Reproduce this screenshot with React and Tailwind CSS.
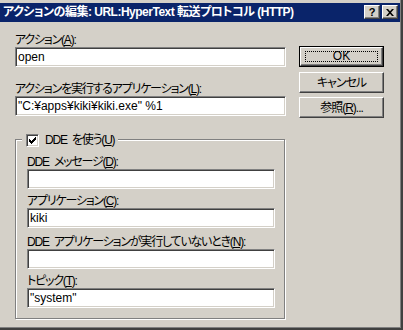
import React from 'react';

const sunken =
  'bg-white border border-t-[#808080] border-l-[#808080] border-r-white border-b-white shadow-[inset_1px_1px_0_#404040,inset_-1px_-1px_0_#d4d0c8]';
const raised =
  'bg-[#d4d0c8] border border-t-white border-l-white border-r-[#404040] border-b-[#404040] shadow-[inset_-1px_-1px_0_#808080]';

function Label({ children }) {
  return (
    <div className="h-[13px] leading-[13px] whitespace-nowrap tracking-[-1.2px] [word-spacing:3px]">{children}</div>
  );
}

function Field({ value = '', className = 'w-full' }) {
  return (
    <div className={`h-[20px] pl-[2px] leading-[18px] whitespace-nowrap overflow-hidden ${sunken} ${className}`}>
      {value}
    </div>
  );
}

function Key({ children }) {
  return <span className="underline underline-offset-[1px]">{children}</span>;
}

function Button({ children, isDefault }) {
  if (isDefault) {
    return (
      <div className="h-[21px] w-[85px] border border-black">
        <div className={`h-full w-full flex items-center justify-center ${raised}`}>
          <div className="h-[11px] w-[73px] border border-dotted border-black flex items-center justify-center leading-[11px]">
            {children}
          </div>
        </div>
      </div>
    );
  }
  return (
    <div className={`h-[21px] w-[85px] flex items-center justify-center tracking-[-1px] ${raised}`}>{children}</div>
  );
}

function Checkbox() {
  return (
    <div className={`w-[13px] h-[13px] flex items-center justify-center ${sunken}`}>
      <svg width="7" height="7" viewBox="0 0 7 7">
        <path d="M0 2h1v1h1v1h1V3h1V2h1V1h1V0h1v3H6v1H5v1H4v1H3v1H2V6H1V5H0z" fill="#000" />
      </svg>
    </div>
  );
}

export default function App() {
  return (
    <div className="w-[403px] h-[330px] flex flex-col bg-[#d4d0c8] border-r-2 border-b-2 border-r-[#404040] border-b-[#404040] shadow-[inset_-1px_-1px_0_#808080] text-[12px] text-black [font-family:'Liberation_Sans','Noto_Sans_CJK_JP',sans-serif] [font-feature-settings:'palt'] overflow-hidden">
      {/* title bar */}
      <div className="mt-[3px] mr-[1px] h-[19px] bg-[#0a246a] flex items-start pl-[3px] pr-[2px]">
        <div className="flex-1 h-[19px] leading-[19px] text-white font-bold whitespace-nowrap tracking-[-0.5px]">
          アクションの編集: URL:HyperText 転送プロトコル (HTTP)
        </div>
        <div className="mt-[2px] flex gap-[2px]">
          <div className={`w-[16px] h-[14px] flex items-center justify-center font-bold text-[11px] leading-none ${raised}`}>?</div>
          <div className={`w-[16px] h-[14px] flex items-center justify-center ${raised}`}>
            <svg width="8" height="7" viewBox="0 0 8 7">
              <path d="M0 0h2l2 2.3L6 0h2L5 3.5 8 7H6L4 4.7 2 7H0l3-3.5z" fill="#000" />
            </svg>
          </div>
        </div>
      </div>

      {/* body */}
      <div className="flex pl-[15px]">
        <div className="w-[271px] flex flex-col pt-[12px]">
          <Label>アクション(<Key>A</Key>):</Label>
          <Field value="open" />
          <div className="mt-[16px]">
            <Label>アクションを実行するアプリケーション(<Key>L</Key>):</Label>
          </div>
          <Field value={'"C:¥apps¥kiki¥kiki.exe" %1'} />

          <div className="mt-[23px] w-[270px] border border-[#808080] shadow-[inset_1px_1px_0_#fff,1px_1px_0_#fff] pl-[11px] pb-[10px] flex flex-col">
            <div className="-mt-[7px] -ml-[5px] self-start h-[14px] px-[4px] bg-[#d4d0c8] flex items-center gap-[6px] leading-[14px]">
              <Checkbox />
              <span className="whitespace-nowrap tracking-[-1.2px] [word-spacing:3px]">DDE を使う(<Key>U</Key>)</span>
            </div>
            <div className="mt-[9px]">
              <Label>DDE メッセージ(<Key>D</Key>):</Label>
            </div>
            <Field className="w-[248px]" />
            <div className="mt-[6px]">
              <Label>アプリケーション(<Key>C</Key>):</Label>
            </div>
            <Field className="w-[248px]" value="kiki" />
            <div className="mt-[8px]">
              <Label>DDE アプリケーションが実行していないとき(<Key>N</Key>):</Label>
            </div>
            <Field className="w-[248px]" />
            <div className="mt-[6px]">
              <Label>トピック(<Key>T</Key>):</Label>
            </div>
            <Field className="w-[248px]" value={'"system"'} />
          </div>
        </div>

        <div className="ml-[13px] flex flex-col pt-[24px]">
          <Button isDefault>OK</Button>
          <div className="mt-[5px]">
            <Button>キャンセル</Button>
          </div>
          <div className="mt-[4px]">
            <Button>参照(<Key>R</Key>)...</Button>
          </div>
        </div>
      </div>
    </div>
  );
}
